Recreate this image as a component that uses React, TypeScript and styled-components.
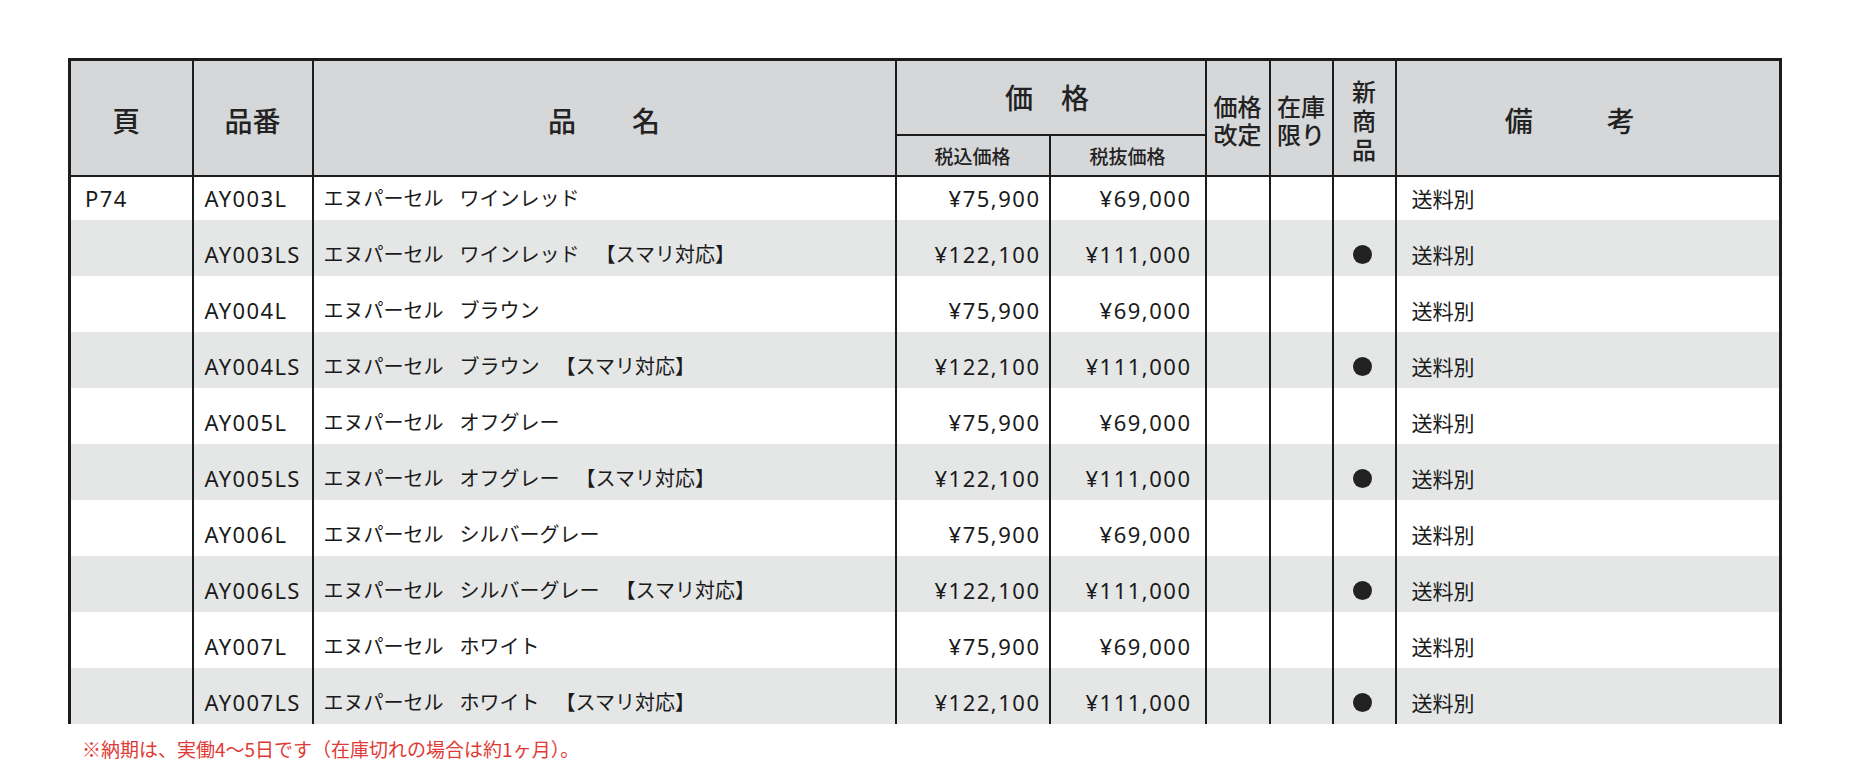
import React from "react";
import styled, { createGlobalStyle } from "styled-components";

const Global = createGlobalStyle`
  html, body { margin: 0; padding: 0; background: #ffffff; }
  body { font-family: "Noto Sans", "Noto Sans CJK JP", sans-serif; color: #1a1a1a; }
`;

const Page = styled.div`
  padding: 58px 0 0 68px;
  width: 1852px;
  height: 775px;
  box-sizing: border-box;
  overflow: hidden;
`;

const Table = styled.table`
  border-collapse: collapse;
  table-layout: fixed;
  width: 1714px;
  border-top: 3px solid #1c1c1c;
  border-left: 3px solid #1c1c1c;
  border-right: 3px solid #1c1c1c;
`;

const HeadRow = styled.tr<{ $h: number }>`
  height: ${(p) => p.$h}px;
`;

const Th = styled.th<{ $size?: number; $pad?: string }>`
  background: #d6d7d9;
  border: 2px solid #1c1c1c;
  font-family: "Noto Sans CJK JP", sans-serif;
  font-weight: 500;
  font-size: ${(p) => p.$size ?? 28}px;
  line-height: 1.1;
  color: #222;
  text-align: center;
  vertical-align: middle;
  padding: ${(p) => p.$pad ?? "6px 0 0 0"};
  white-space: pre;
`;

const Stack = styled.div<{ $lh: number }>`
  display: flex;
  flex-direction: column;
  align-items: center;
  line-height: ${(p) => p.$lh}px;
`;

const Spread = styled.div<{ $gap: number; $shift?: number }>`
  display: flex;
  justify-content: center;
  gap: ${(p) => p.$gap}px;
  margin-right: ${(p) => p.$shift ?? 0}px;
`;

const BodyRow = styled.tr<{ $grey: boolean; $h: number }>`
  height: ${(p) => p.$h}px;
  background: ${(p) => (p.$grey ? "#e5e6e6" : "#ffffff")};
`;

const Td = styled.td<{ $align?: string; $pl?: number; $pr?: number }>`
  border-left: 2px solid #1c1c1c;
  border-right: 2px solid #1c1c1c;
  font-size: 22px;
  line-height: 24px;
  vertical-align: bottom;
  padding: 0 ${(p) => p.$pr ?? 0}px 10px ${(p) => p.$pl ?? 0}px;
  text-align: ${(p) => p.$align ?? "left"};
  white-space: nowrap;
  overflow: hidden;
`;

const Code = styled.span`
  letter-spacing: 1.4px;
`;

const Price = styled.span`
  letter-spacing: 1.5px;
`;

const Name = styled.span`
  display: inline-flex;
  gap: 16px;
  font-family: "Noto Sans CJK JP", sans-serif;
  font-size: 20px;
`;

const Note = styled.span`
  font-family: "Noto Sans CJK JP", sans-serif;
  font-size: 21px;
`;

const Dot = styled.span`
  display: inline-block;
  width: 19px;
  height: 19px;
  border-radius: 50%;
  background: #222;
  margin: 0 4px 2px 0;
  vertical-align: middle;
`;

const Footnote = styled.p`
  margin: 11px 0 0 14px;
  font-family: "Noto Sans CJK JP", sans-serif;
  font-size: 19px;
  color: #df3a36;
`;

type Row = {
  page: string;
  code: string;
  parts: string[];
  incl: string;
  excl: string;
  isNew: boolean;
};

const colors = ["ワインレッド", "ブラウン", "オフグレー", "シルバーグレー", "ホワイト"];
const rows: Row[] = [];
colors.forEach((c, i) => {
  const n = `AY00${i + 3}L`;
  rows.push({ page: i === 0 ? "P74" : "", code: n, parts: ["エヌパーセル", c], incl: "¥75,900", excl: "¥69,000", isNew: false });
  rows.push({ page: "", code: `${n}S`, parts: ["エヌパーセル", c, "【スマリ対応】"], incl: "¥122,100", excl: "¥111,000", isNew: true });
});

export default function App() {
  return (
    <Page>
      <Global />
      <Table>
        <colgroup>
          <col style={{ width: 123 }} />
          <col style={{ width: 120 }} />
          <col style={{ width: 583 }} />
          <col style={{ width: 154 }} />
          <col style={{ width: 156 }} />
          <col style={{ width: 64 }} />
          <col style={{ width: 63 }} />
          <col style={{ width: 63 }} />
          <col />
        </colgroup>
        <thead>
          <HeadRow $h={75}>
            <Th rowSpan={2} $pad="6px 10px 0 0">頁</Th>
            <Th rowSpan={2}>品番</Th>
            <Th rowSpan={2}>
              <Spread $gap={56}>
                <span>品</span>
                <span>名</span>
              </Spread>
            </Th>
            <Th colSpan={2} $pad="0">
              <Spread $gap={28} $shift={7}>
                <span>価</span>
                <span>格</span>
              </Spread>
            </Th>
            <Th rowSpan={2} $size={24} $pad="4px 0 0 0">
              <Stack $lh={28}>
                <span>価格</span>
                <span>改定</span>
              </Stack>
            </Th>
            <Th rowSpan={2} $size={24} $pad="4px 0 0 0">
              <Stack $lh={28}>
                <span>在庫</span>
                <span>限り</span>
              </Stack>
            </Th>
            <Th rowSpan={2} $size={24} $pad="4px 0 0 0">
              <Stack $lh={29}>
                <span>新</span>
                <span>商</span>
                <span>品</span>
              </Stack>
            </Th>
            <Th rowSpan={2}>
              <Spread $gap={74} $shift={36}>
                <span>備</span>
                <span>考</span>
              </Spread>
            </Th>
          </HeadRow>
          <HeadRow $h={41}>
            <Th $size={19} $pad="2px 0 0 0">税込価格</Th>
            <Th $size={19} $pad="2px 0 0 0">税抜価格</Th>
          </HeadRow>
        </thead>
        <tbody>
          {rows.map((r, i) => (
            <BodyRow key={r.code} $grey={i % 2 === 1} $h={i === 0 ? 44 : 56}>
              <Td $pl={14}>
                <Code>{r.page}</Code>
              </Td>
              <Td $pl={11}>
                <Code>{r.code}</Code>
              </Td>
              <Td $pl={10}>
                <Name>
                  {r.parts.map((p) => (
                    <span key={p}>{p}</span>
                  ))}
                </Name>
              </Td>
              <Td $align="right" $pr={8}>
                <Price>{r.incl}</Price>
              </Td>
              <Td $align="right" $pr={13}>
                <Price>{r.excl}</Price>
              </Td>
              <Td />
              <Td />
              <Td $align="center">{r.isNew ? <Dot /> : null}</Td>
              <Td $pl={15}>
                <Note>送料別</Note>
              </Td>
            </BodyRow>
          ))}
        </tbody>
      </Table>
      <Footnote>※納期は、実働4〜5日です（在庫切れの場合は約1ヶ月）。</Footnote>
    </Page>
  );
}
